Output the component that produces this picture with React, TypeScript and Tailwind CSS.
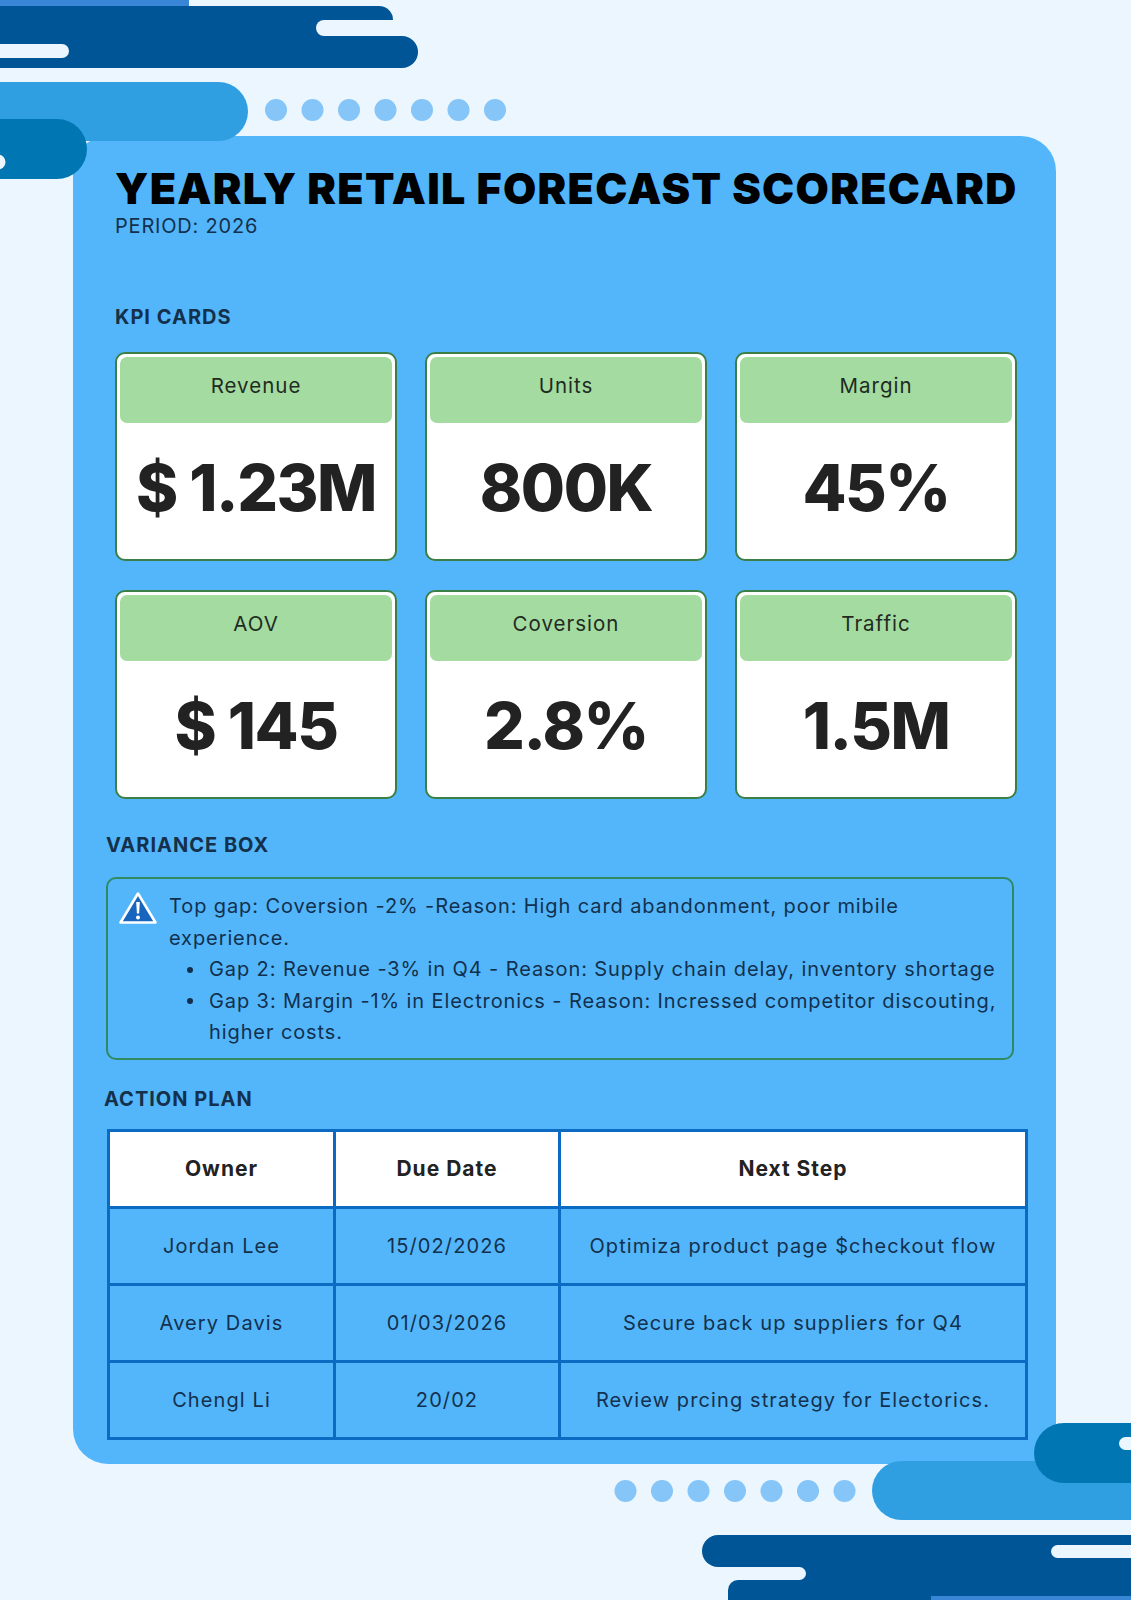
import React from 'react';

const kpis = [
  { label: 'Revenue', value: '$ 1.23M' },
  { label: 'Units', value: '800K' },
  { label: 'Margin', value: '45%' },
  { label: 'AOV', value: '$ 145' },
  { label: 'Coversion', value: '2.8%' },
  { label: 'Traffic', value: '1.5M' },
];

const actions = [
  { owner: 'Jordan Lee', due: '15/02/2026', step: 'Optimiza product page $checkout flow' },
  { owner: 'Avery Davis', due: '01/03/2026', step: 'Secure back up suppliers for Q4' },
  { owner: 'Chengl Li', due: '20/02', step: 'Review prcing strategy for Electorics.' },
];

const dots = [0, 1, 2, 3, 4, 5, 6];

// Decorative wave/pill drawing in the top-left corner
function TopDecoration() {
  return (
    <svg width="520" height="200" viewBox="0 0 520 200" className="absolute left-0 top-0">
      <rect x="0" y="0" width="189" height="6" fill="#3a86d6" />
      <rect x="-50" y="6" width="443" height="40" rx="14" fill="#005596" />
      <rect x="-50" y="36" width="468" height="32" rx="16" fill="#005596" />
      <rect x="316" y="20" width="200" height="16" rx="8" fill="#ebf6ff" />
      <rect x="-20" y="44" width="89" height="14" rx="7" fill="#ebf6ff" />
      <rect x="-40" y="82" width="288" height="59" rx="29.5" fill="#2f9fe1" />
      <rect x="-40" y="119" width="127" height="60" rx="30" fill="#0077b2" />
      <circle cx="-2" cy="162" r="7.5" fill="#ebf6ff" />
      {dots.map((i) => (
        <circle key={i} cx={276 + i * 36.5} cy="110" r="11" fill="#85c5f7" />
      ))}
    </svg>
  );
}

// Decorative wave/pill drawing in the bottom-right corner
function BottomDecoration() {
  return (
    <svg width="571" height="200" viewBox="560 1400 571 200" className="absolute left-[560px] top-[1400px]">
      {dots.map((i) => (
        <circle key={i} cx={625.5 + i * 36.5} cy="1491" r="11" fill="#85c5f7" />
      ))}
      <rect x="872" y="1461" width="320" height="59" rx="29.5" fill="#2f9fe1" />
      <rect x="1034" y="1423" width="160" height="60" rx="30" fill="#0077b2" />
      <rect x="1119" y="1437" width="40" height="13" rx="6.5" fill="#ebf6ff" />
      <rect x="702" y="1535" width="600" height="32" rx="16" fill="#005596" />
      <rect x="760" y="1560" width="600" height="40" fill="#005596" />
      <rect x="600" y="1567" width="206" height="13" rx="6.5" fill="#ebf6ff" />
      <rect x="728" y="1580" width="600" height="30" rx="10" fill="#005596" />
      <rect x="1051" y="1545" width="120" height="13" rx="6.5" fill="#ebf6ff" />
      <rect x="931" y="1596" width="200" height="4" fill="#3a86d6" />
    </svg>
  );
}

function WarningIcon() {
  return (
    <svg width="40" height="34" viewBox="0 0 40 34" className="shrink-0">
      <path
        d="M20 2.5 L37.5 31.5 L2.5 31.5 Z"
        fill="#1765bd"
        stroke="#ffffff"
        strokeWidth="2.6"
        strokeLinejoin="round"
      />
      <path d="M18.2 11 h3.6 l-0.7 11.5 h-2.2 z" fill="#ffffff" />
      <circle cx="20" cy="26.4" r="2" fill="#ffffff" />
    </svg>
  );
}

function Bullet() {
  return (
    <div className="flex h-[31.5px] w-[40px] shrink-0 items-center">
      <span className="ml-[18px] block h-[6px] w-[6px] rounded-full bg-[#12304e]" />
    </div>
  );
}

function KpiCard({ label, value }: { label: string; value: string }) {
  return (
    <div className="flex h-[209px] flex-col rounded-[10px] border-2 border-[#3c7f46] bg-white p-[3px]">
      <div className="flex h-[66px] items-center justify-center rounded-[7px] bg-[#a4dba0] pb-[7px] text-[20.5px] tracking-[1px] text-[#1f2b22]">
        {label}
      </div>
      <div className="flex flex-1 items-center justify-center pb-[4px] text-[64px] font-extrabold leading-none tracking-[-1.5px] text-[#222222]">
        {value}
      </div>
    </div>
  );
}

export default function App() {
  return (
    <div className="relative h-[1600px] w-[1131px] overflow-hidden bg-[#ebf6ff] font-['Inter','Liberation_Sans',sans-serif]">
      {/* Main scorecard */}
      <div className="ml-[73px] mt-[136px] h-[1328px] w-[983px] rounded-[35px] bg-[#53b6fa] pt-[28px]">
        <h1 className="pl-[42px] text-[43px] font-black leading-[48px] tracking-[1.3px] text-black">
          YEARLY RETAIL FORECAST SCORECARD
        </h1>
        <p className="mt-[2px] pl-[42px] text-[20px] leading-[24px] tracking-[0.8px] text-[#14304d]">PERIOD: 2026</p>

        <h2 className="mt-[67px] pl-[42px] text-[20px] font-bold leading-[24px] tracking-[1px] text-[#14304a]">
          KPI CARDS
        </h2>
        <div className="ml-[42px] mt-[23px] grid w-[902px] grid-cols-3 gap-x-[28px] gap-y-[29px]">
          {kpis.map((k) => (
            <KpiCard key={k.label} label={k.label} value={k.value} />
          ))}
        </div>

        <h2 className="mt-[34px] pl-[33px] text-[20px] font-bold leading-[24px] tracking-[1px] text-[#14304a]">
          VARIANCE BOX
        </h2>
        <div className="ml-[33px] mt-[20px] h-[183px] w-[908px] rounded-[10px] border-2 border-[#2f8a62] pl-[10px] pt-[12px] text-[20px] leading-[31.5px] tracking-[0.9px] text-[#12304e]">
          <div className="flex gap-[11px]">
            <WarningIcon />
            <div>
              <p className="whitespace-nowrap">
                Top gap: Coversion -2% -Reason: High card abandonment, poor mibile
                <br />
                experience.
              </p>
              <div className="flex">
                <Bullet />
                <p className="whitespace-nowrap">
                  Gap 2: Revenue -3% in Q4 - Reason: Supply chain delay, inventory shortage
                </p>
              </div>
              <div className="flex">
                <Bullet />
                <p className="whitespace-nowrap">
                  Gap 3: Margin -1% in Electronics - Reason: Incressed competitor discouting,
                  <br />
                  higher costs.
                </p>
              </div>
            </div>
          </div>
        </div>

        <h2 className="mt-[27px] pl-[31px] text-[20px] font-bold leading-[24px] tracking-[1px] text-[#14304a]">
          ACTION PLAN
        </h2>
        <table className="ml-[34px] mt-[18px] w-[921px] border-collapse border-[3px] border-[#0b6bc2] text-center text-[20px]">
          <thead>
            <tr className="h-[77px] bg-white">
              <th className="w-[226px] border-[3px] border-[#0b6bc2] text-[21px] font-bold tracking-[1px] text-[#222222]">
                Owner
              </th>
              <th className="w-[225px] border-[3px] border-[#0b6bc2] text-[21px] font-bold tracking-[1px] text-[#222222]">
                Due Date
              </th>
              <th className="border-[3px] border-[#0b6bc2] text-[21px] font-bold tracking-[1px] text-[#222222]">
                Next Step
              </th>
            </tr>
          </thead>
          <tbody>
            {actions.map((a) => (
              <tr key={a.owner} className="h-[77px] tracking-[1.1px] text-[#13304d]">
                <td className="border-[3px] border-[#0b6bc2]">{a.owner}</td>
                <td className="border-[3px] border-[#0b6bc2]">{a.due}</td>
                <td className="border-[3px] border-[#0b6bc2]">{a.step}</td>
              </tr>
            ))}
          </tbody>
        </table>
      </div>

      <TopDecoration />
      <BottomDecoration />
    </div>
  );
}
